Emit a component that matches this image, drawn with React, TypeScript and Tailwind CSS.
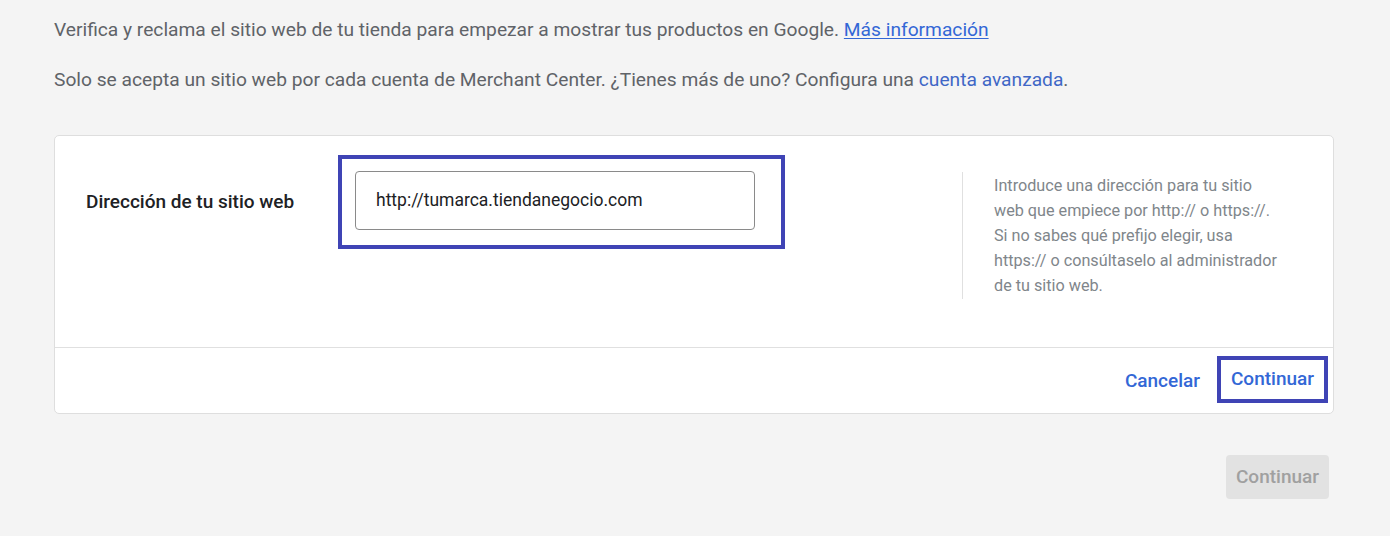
import React from 'react';

const FONT = { fontFamily: 'Roboto, "Noto Sans", sans-serif' };

export default function App() {
  return (
    <div className="h-[536px] w-full bg-[#f4f4f4] text-[#5f6368]" style={FONT}>
      <div className="pl-[54px] pr-[56px] pt-[18px]">
        <p className="text-[19.2px] leading-[24px]">
          Verifica y reclama el sitio web de tu tienda para empezar a mostrar tus productos en Google.{' '}
          <a className="text-[#3367d6] underline underline-offset-2">Más información</a>
        </p>
        <p className="mt-[26px] text-[19.2px] leading-[24px]">
          Solo se acepta un sitio web por cada cuenta de Merchant Center. ¿Tienes más de uno? Configura una{' '}
          <a className="text-[#3f67c6]">cuenta avanzada</a>.
        </p>

        <section className="mt-[43px] rounded-[5px] border border-[#dedede] bg-white">
          <div className="flex h-[211px] items-start">
            <div className="w-[283px] pl-[31px] pt-[52px] text-[19px] font-medium text-[#202124]">
              Dirección de tu sitio web
            </div>
            <div className="mt-[19px] border-[4px] border-[#3f44b5] pb-[15px] pl-[13px] pr-[26px] pt-[12px]">
              <div className="flex h-[59px] w-[400px] items-center rounded-[4px] border border-[#8a8a8a] px-[20px] text-[17.5px] text-[#202124]">
                http://tumarca.tiendanegocio.com
              </div>
            </div>
            <div className="ml-[177px] mt-[36px] flex">
              <div className="w-px self-stretch bg-[#e0e0e0]" />
              <p className="ml-[31px] whitespace-nowrap py-[1px] text-[16.2px] leading-[25px] text-[#80868b]">
                Introduce una dirección para tu sitio
                <br />
                web que empiece por http:// o https://.
                <br />
                Si no sabes qué prefijo elegir, usa
                <br />
                https:// o consúltaselo al administrador
                <br />
                de tu sitio web.
              </p>
            </div>
          </div>
          <div className="flex h-[66px] items-start justify-end border-t border-[#e0e0e0] pr-[5px] pt-[8px]">
            <button className="mr-[17px] mt-[11px] text-[19px] font-medium text-[#3367d6]">Cancelar</button>
            <button className="flex h-[47px] w-[111px] items-center justify-center border-[4px] border-[#3f44b5] text-[19px] font-medium text-[#3367d6]">
              Continuar
            </button>
          </div>
        </section>

        <div className="mt-[41px] flex justify-end pr-[5px]">
          <button className="h-[44px] w-[103px] rounded-[4px] bg-[#e2e2e2] text-[19px] font-medium text-[#a0a0a0]">
            Continuar
          </button>
        </div>
      </div>
    </div>
  );
}
